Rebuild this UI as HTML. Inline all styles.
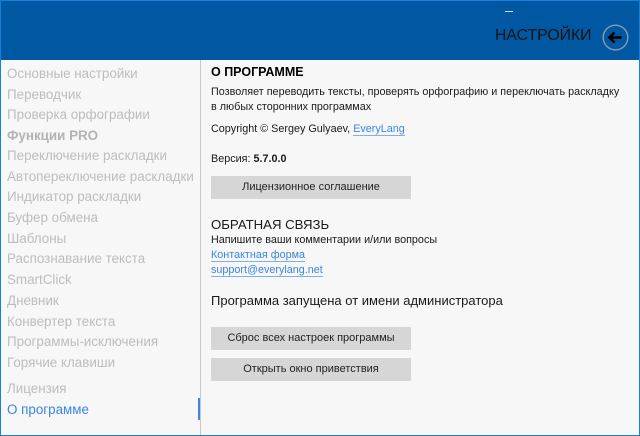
<!DOCTYPE html>
<html><head><meta charset="utf-8"><style>
*{margin:0;padding:0;box-sizing:border-box}
body{width:640px;height:436px;overflow:hidden;background:#f7f7f7;font-family:"Segoe UI","Liberation Sans","Noto Sans CJK SC",sans-serif;position:relative}
.frame{position:absolute;inset:0;border:1px solid #1c7fd6;pointer-events:none;z-index:5}
.hdr{position:absolute;left:0;top:0;width:640px;height:60px;background:#0058a3}
.t{position:absolute;white-space:nowrap}
.side{position:absolute;left:7px;font-size:13.4px;color:#bdbdbd;line-height:18px}
.c{position:absolute;left:211px;font-size:10.8px;color:#1a1a1a;white-space:nowrap;line-height:15px}
.lnk{color:#3a86e0;border-bottom:1px solid #7fb0ea}
.btn{position:absolute;left:211px;width:200px;height:23px;background:#d6d6d6;font-size:11px;color:#222;text-align:center;line-height:23px}
</style></head><body>
<div class="hdr"></div>
<div class="t" style="left:505px;top:11px;width:8px;height:1px;background:#cfe0f0"></div>
<div class="t" style="left:495px;top:27px;font-size:15.8px;color:#111">НАСТРОЙКИ</div>
<svg class="t" style="left:602px;top:24px" width="27" height="27" viewBox="0 0 27 27"><circle cx="13.5" cy="13.5" r="12.3" fill="none" stroke="#8a9bb0" stroke-width="1.4"/><path d="M7.5 13.5H19.5M12.5 8.5L7.5 13.5L12.5 18.5" fill="none" stroke="#000" stroke-width="2.6"/></svg>
<div class="t" style="left:200px;top:60px;width:1px;height:376px;background:#c8c8c8"></div>
<div class="t" style="left:198px;top:398px;width:2px;height:22px;background:#3a86e0"></div>
<div class="side" style="top:65px">Основные настройки</div>
<div class="side" style="top:86px">Переводчик</div>
<div class="side" style="top:106px">Проверка орфографии</div>
<div class="side" style="top:127px;font-weight:bold;color:#b3b3b3">Функции PRO</div>
<div class="side" style="top:147px">Переключение раскладки</div>
<div class="side" style="top:168px">Автопереключение раскладки</div>
<div class="side" style="top:188px">Индикатор раскладки</div>
<div class="side" style="top:209px">Буфер обмена</div>
<div class="side" style="top:230px">Шаблоны</div>
<div class="side" style="top:250px">Распознавание текста</div>
<div class="side" style="top:271px">SmartClick</div>
<div class="side" style="top:292px">Дневник</div>
<div class="side" style="top:313px">Конвертер текста</div>
<div class="side" style="top:333px">Программы-исключения</div>
<div class="side" style="top:354px">Горячие клавиши</div>
<div class="side" style="top:380px">Лицензия</div>
<div class="side" style="top:401px;color:#3a86e0">О программе</div>

<div class="c" style="top:65px;font-size:12.5px;font-weight:bold;color:#000">О ПРОГРАММЕ</div>
<div class="c" style="top:85px">Позволяет переводить тексты, проверять орфографию и переключать раскладку</div>
<div class="c" style="top:100px">в любых сторонних программах</div>
<div class="c" style="top:122px">Copyright © Sergey Gulyaev, <span class="lnk">EveryLang</span></div>
<div class="c" style="top:152px">Версия: <b>5.7.0.0</b></div>
<div class="btn" style="top:176px">Лицензионное соглашение</div>
<div class="c" style="top:217px;font-size:13.2px">ОБРАТНАЯ СВЯЗЬ</div>
<div class="c" style="top:233px">Напишите ваши комментарии и/или вопросы</div>
<div class="c" style="top:248px"><span class="lnk">Контактная форма</span></div>
<div class="c" style="top:263px"><span class="lnk">support@everylang.net</span></div>
<div class="c" style="top:292px;font-size:13px;line-height:18px">Программа запущена от имени администратора</div>
<div class="btn" style="top:327px">Сброс всех настроек программы</div>
<div class="btn" style="top:358px">Открыть окно приветствия</div>
<div class="frame"></div>
</body></html>
